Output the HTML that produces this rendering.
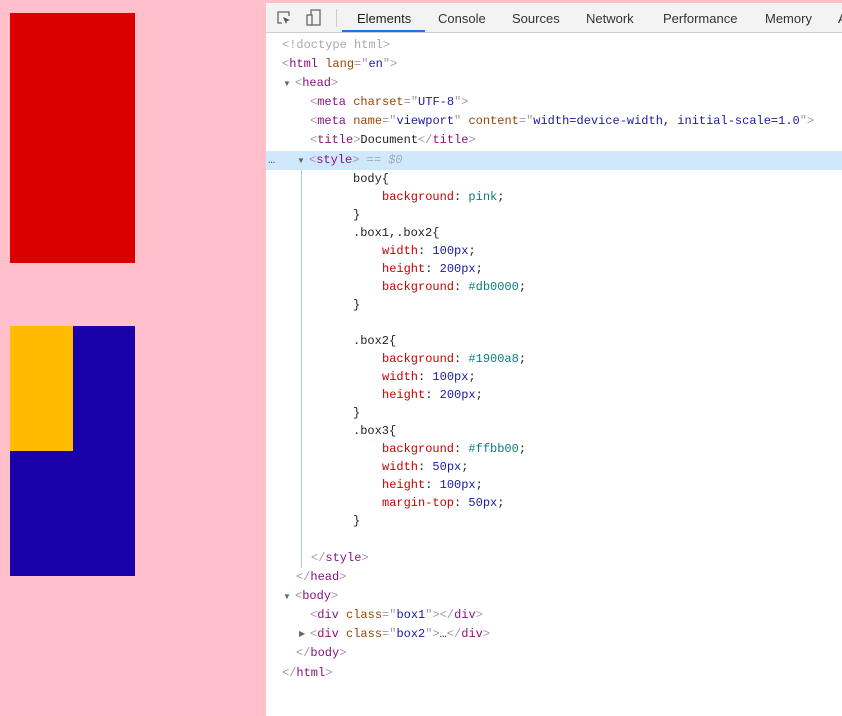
<!DOCTYPE html>
<html><head><style>
body{margin:0;width:842px;height:716px;background:pink;position:relative;overflow:hidden;font-family:"Liberation Sans",sans-serif}
.b{position:absolute}
#dt{position:absolute;left:266px;top:3px;width:576px;height:713px;background:#fff}
#tb{position:absolute;left:0;top:0;width:576px;height:29px;background:#f3f3f3;border-bottom:1px solid #cbcdd1}
.tab{position:absolute;top:8px;font-size:13px;color:#333}
.l{position:absolute;height:18px;line-height:18px;font-family:"Liberation Mono",monospace;font-size:12px;color:#222;white-space:pre}
.t{color:#881280}.k{color:#a894a6}.a{color:#994500}.v{color:#1a1aa6}.p{color:#c80000}.n{color:#1a1aa6}.c{color:#0b7d7d}.g{color:#aaa}
.ar{position:absolute;font-size:8px;color:#666}
</style></head><body>
<div class="b" style="left:10px;top:13px;width:125px;height:250px;background:#db0000"></div>
<div class="b" style="left:10px;top:326px;width:125px;height:250px;background:#1900a8"></div>
<div class="b" style="left:10px;top:326px;width:63px;height:125px;background:#ffbb00"></div>
<div id="dt">
<div id="tb">
<svg style="position:absolute;left:10px;top:7px" width="16" height="16" viewBox="0 0 16 16"><path d="M6 13H2V2h11v4" fill="none" stroke="#666" stroke-width="1.3"/><path d="M7 7l7 3-3 1-1 3z" fill="#555"/></svg>
<svg style="position:absolute;left:40px;top:6px" width="16" height="18" viewBox="0 0 16 18"><rect x="5" y="1" width="9" height="15" fill="none" stroke="#666" stroke-width="1.3"/><rect x="1" y="6" width="5" height="10" fill="#f3f3f3" stroke="#666" stroke-width="1.3"/></svg>
<div style="position:absolute;left:70px;top:6px;width:1px;height:18px;background:#ccc"></div>
<div class="tab" style="left:91px;color:#222">Elements</div>
<div style="position:absolute;left:76px;top:27px;width:83px;height:2px;background:#1a73e8"></div>
<div class="tab" style="left:172px">Console</div>
<div class="tab" style="left:246px">Sources</div>
<div class="tab" style="left:320px">Network</div>
<div class="tab" style="left:397px">Performance</div>
<div class="tab" style="left:499px">Memory</div>
<div class="tab" style="left:572px">A</div>
</div>
<div style="position:absolute;left:0;top:148px;width:576px;height:19px;background:#cfe8fc"></div>
<div style="position:absolute;left:35px;top:167px;width:1px;height:398px;background:#a8c6e6"></div>
</div>
<div class="l" style="left:282px;top:36px"><span class="g">&lt;!doctype html&gt;</span></div>
<div class="l" style="left:282px;top:55px"><span class="k">&lt;</span><span class="t">html</span> <span class="a">lang</span><span class="k">="</span><span class="v">en</span><span class="k">"&gt;</span></div>
<div class="ar" style="left:283px;top:79px">▼</div>
<div class="l" style="left:295px;top:74px"><span class="k">&lt;</span><span class="t">head</span><span class="k">&gt;</span></div>
<div class="l" style="left:310px;top:93px"><span class="k">&lt;</span><span class="t">meta</span> <span class="a">charset</span><span class="k">="</span><span class="v">UTF-8</span><span class="k">"&gt;</span></div>
<div class="l" style="left:310px;top:112px"><span class="k">&lt;</span><span class="t">meta</span> <span class="a">name</span><span class="k">="</span><span class="v">viewport</span><span class="k">"</span> <span class="a">content</span><span class="k">="</span><span class="v">width=device-width, initial-scale=1.0</span><span class="k">"&gt;</span></div>
<div class="l" style="left:310px;top:131px"><span class="k">&lt;</span><span class="t">title</span><span class="k">&gt;</span>Document<span class="k">&lt;/</span><span class="t">title</span><span class="k">&gt;</span></div>
<div class="l" style="left:268px;top:151px;color:#555">…</div>
<div class="ar" style="left:297px;top:156px">▼</div>
<div class="l" style="left:309px;top:151px"><span class="k">&lt;</span><span class="t">style</span><span class="k">&gt;</span> <span class="g">== <i>$0</i></span></div>
<div class="l" style="left:353px;top:170px">body{</div>
<div class="l" style="left:382px;top:188px"><span class="p">background</span>: <span class="c">pink</span>;</div>
<div class="l" style="left:353px;top:206px">}</div>
<div class="l" style="left:353px;top:224px">.box1,.box2{</div>
<div class="l" style="left:382px;top:242px"><span class="p">width</span>: <span class="n">100px</span>;</div>
<div class="l" style="left:382px;top:260px"><span class="p">height</span>: <span class="n">200px</span>;</div>
<div class="l" style="left:382px;top:278px"><span class="p">background</span>: <span class="c">#db0000</span>;</div>
<div class="l" style="left:353px;top:296px">}</div>
<div class="l" style="left:353px;top:332px">.box2{</div>
<div class="l" style="left:382px;top:350px"><span class="p">background</span>: <span class="c">#1900a8</span>;</div>
<div class="l" style="left:382px;top:368px"><span class="p">width</span>: <span class="n">100px</span>;</div>
<div class="l" style="left:382px;top:386px"><span class="p">height</span>: <span class="n">200px</span>;</div>
<div class="l" style="left:353px;top:404px">}</div>
<div class="l" style="left:353px;top:422px">.box3{</div>
<div class="l" style="left:382px;top:440px"><span class="p">background</span>: <span class="c">#ffbb00</span>;</div>
<div class="l" style="left:382px;top:458px"><span class="p">width</span>: <span class="n">50px</span>;</div>
<div class="l" style="left:382px;top:476px"><span class="p">height</span>: <span class="n">100px</span>;</div>
<div class="l" style="left:382px;top:494px"><span class="p">margin-top</span>: <span class="n">50px</span>;</div>
<div class="l" style="left:353px;top:512px">}</div>
<div class="l" style="left:311px;top:549px"><span class="k">&lt;/</span><span class="t">style</span><span class="k">&gt;</span></div>
<div class="l" style="left:296px;top:568px"><span class="k">&lt;/</span><span class="t">head</span><span class="k">&gt;</span></div>
<div class="ar" style="left:283px;top:592px">▼</div>
<div class="l" style="left:295px;top:587px"><span class="k">&lt;</span><span class="t">body</span><span class="k">&gt;</span></div>
<div class="l" style="left:310px;top:606px"><span class="k">&lt;</span><span class="t">div</span> <span class="a">class</span><span class="k">="</span><span class="v">box1</span><span class="k">"&gt;&lt;/</span><span class="t">div</span><span class="k">&gt;</span></div>
<div class="ar" style="left:299px;top:629px">▶</div>
<div class="l" style="left:310px;top:625px"><span class="k">&lt;</span><span class="t">div</span> <span class="a">class</span><span class="k">="</span><span class="v">box2</span><span class="k">"&gt;</span>…<span class="k">&lt;/</span><span class="t">div</span><span class="k">&gt;</span></div>
<div class="l" style="left:296px;top:644px"><span class="k">&lt;/</span><span class="t">body</span><span class="k">&gt;</span></div>
<div class="l" style="left:282px;top:664px"><span class="k">&lt;/</span><span class="t">html</span><span class="k">&gt;</span></div>
</body></html>
